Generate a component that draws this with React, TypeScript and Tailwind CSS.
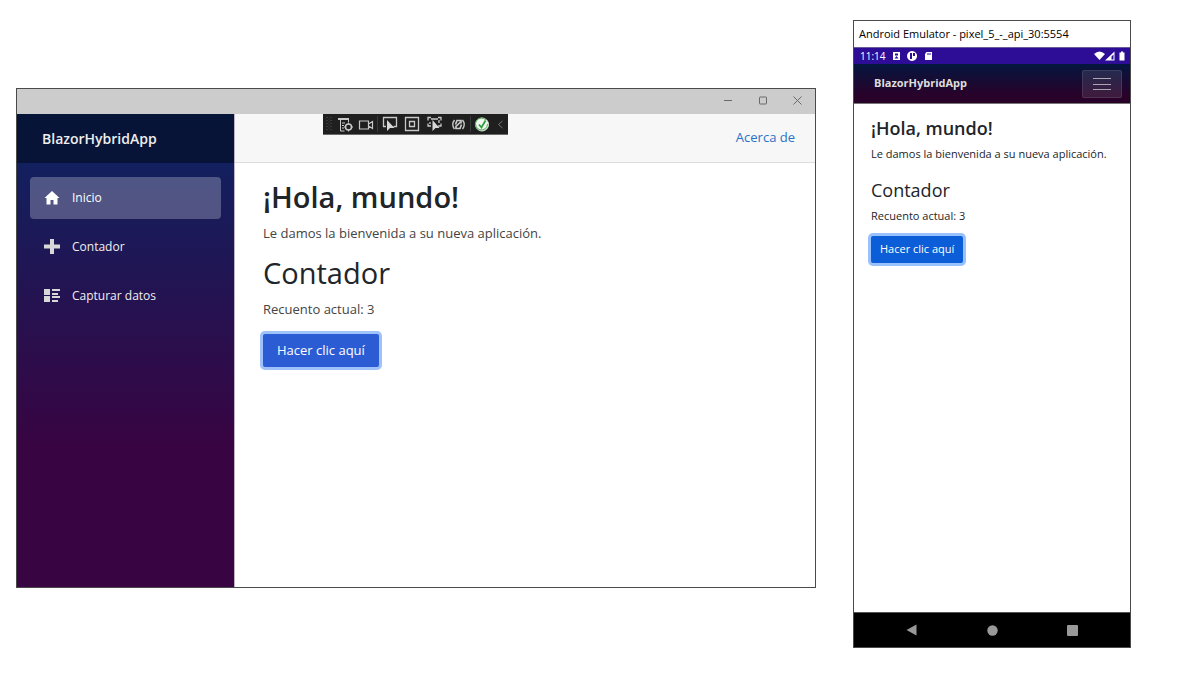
import { useState, type ReactNode } from "react";

function NavItem({ active, icon, children }: { active?: boolean; icon: ReactNode; children: ReactNode }) {
  return (
    <a
      href="#"
      className={
        active
          ? "flex items-center h-[42px] gap-3 px-3.5 rounded bg-white/25 text-xs text-white"
          : "flex items-center h-[42px] gap-3 px-3.5 rounded text-xs text-[#f0f0f0]"
      }
    >
      {icon}
      {children}
    </a>
  );
}

function DebugToolbar() {
  return (
    <div className="absolute top-[25px] left-[306px] flex items-center w-[185px] h-[21px] bg-[#1f1f1f] border-b border-[#6b6b6b]">
      <svg viewBox="0 0 185 20" className="w-full h-full" fill="none" stroke="#c8c8c8">
        {/* grip */}
        <path d="M4 3v14M8 3v14" stroke="#555" strokeDasharray="1 2" />
        <path d="M6 4.500v12" stroke="#444" strokeDasharray="1 2" />
        {/* live tree */}
        <path d="M15 5h11" strokeWidth="2" />
        <path d="M17.500 5v12h4M19 9h3M19 11.500h2M19 14h2M25.500 5v3" />
        <circle cx="25.500" cy="13" r="3" strokeWidth="1.500" />
        <path d="M25.500 8.500v2M25.500 15.500v2M21 13h2M28 13h2" />
        {/* camera */}
        <path d="M36.500 7h9v8h-9zM45.500 10l4-2.500v7l-4-2.500" strokeWidth="1.200" />
        <path d="M54.500 2v16M147.500 2v16" stroke="#3a3a3a" />
        {/* select element */}
        <path d="M63 12.500h-2.500v-9h13v9h-3" strokeWidth="1.300" />
        <path d="M64 6v11l3-3h4.500z" fill="#d8d8d8" stroke="none" />
        {/* layout adorners */}
        <path d="M82.500 3.500h13v13h-13z" strokeWidth="1.300" />
        <path d="M86.500 7.500h5v5h-5z" strokeWidth="1.300" />
        {/* track focus */}
        <path d="M105 6.500V3.500h3M105 9.500v2.500h3M118 6.500V3.500h-3M118 9.500v2.500h-3M108 5h7M107 8v2M116 6v3" strokeWidth="1.300" />
        <path d="M109.500 6v11l3-3h4z" fill="#d8d8d8" stroke="none" />
        {/* hot reload */}
        <path d="M131.500 6q-3.500 4.500 0 9M139.500 6q3.500 4.500 0 9" strokeWidth="1.500" />
        <path d="M132.500 10.500l1.500-4h4v3M138.500 10.500l-1.500 4h-4v-3M133.500 12l4-4" strokeWidth="1.700" />
        <circle cx="159" cy="10.500" r="6.500" fill="#f2f7f2" stroke="#d5e6d5" />
        <path d="M163 6a6 6 0 1 0 1.500 4" stroke="#4fae55" />
        <path d="M156 10.500l2.500 3 4-7" stroke="#2f9e3a" strokeWidth="1.800" />
        <path d="M179.500 7l-4 3.500 4 3.500" stroke="#777" />
      </svg>
    </div>
  );
}

function DesktopWindow({ count, onClick }: { count: number; onClick: () => void }) {
  return (
    <section className="relative flex flex-col flex-1 min-w-0 mt-[68px] h-[500px] border border-[#4a4a4a] bg-white">
      <div className="flex items-center justify-end h-[25px] gap-6 pr-3 pb-0.5 bg-[#cccccc] text-[#6a6a6a]">
        <button aria-label="Minimizar">
          <svg width="11" height="11" className="block" fill="none" stroke="currentColor"><path d="M2 5.500h8" /></svg>
        </button>
        <button aria-label="Maximizar">
          <svg width="11" height="11" className="block" fill="none" stroke="currentColor"><rect x="2.500" y="2" width="7" height="7" rx="0.500" /></svg>
        </button>
        <button aria-label="Cerrar">
          <svg width="11" height="11" className="block" fill="none" stroke="currentColor"><path d="M1.500 1.500l8 8M9.500 1.500l-8 8" /></svg>
        </button>
      </div>

      <div className="flex flex-1 min-h-0">
        <aside className="flex flex-col w-[218px] shrink-0 border-r border-[#bdb3c4] bg-linear-to-b/srgb from-[#0c2564] to-[#380442] to-70%">
          <div className="flex items-center h-[49px] pl-[25px] bg-[#061230]/85 text-sm font-semibold text-[#eeeeee]">
            BlazorHybridApp
          </div>
          <nav className="flex flex-col gap-[7px] pt-3.5 px-[13px]">
            <NavItem
              active
              icon={<svg width="16" height="16" viewBox="0 0 16 16" fill="white"><path d="M8 1L0.500 8H2.500v6.500h4V10h3v4.500h4V8h2z" /></svg>}
            >
              Inicio
            </NavItem>
            <NavItem icon={<svg width="16" height="16" viewBox="0 0 16 16" fill="#d8d8d8"><path d="M6 0h4v5.500h6v4h-6V15H6V9.500H0v-4h6z" /></svg>}>
              Contador
            </NavItem>
            <NavItem
              icon={
                <svg width="16" height="16" viewBox="0 0 16 16" fill="#d8d8d8">
                  <path d="M0 1h6v6H0zM0 8h6v6H0zM8 1h8v2H8zM8 5h6v2H8zM8 8h8v2H8zM8 12h6v2H8z" />
                </svg>
              }
            >
              Capturar datos
            </NavItem>
          </nav>
        </aside>

        <main className="flex-1 min-w-0">
          <div className="flex items-center justify-end h-[49px] pr-5 bg-[#f7f7f7] border-b border-[#dddddd]">
            <a href="#" className="text-[13px] text-[#2a72c8]">Acerca de</a>
          </div>
          <article className="px-7 pt-4 text-[13px] text-[#444444]">
            <h1 className="text-[29px] leading-9 font-semibold text-[#212529]">¡Hola, mundo!</h1>
            <p className="mt-2 leading-5">Le damos la bienvenida a su nueva aplicación.</p>
            <h2 className="mt-3 text-[29px] leading-9 text-[#212529]">Contador</h2>
            <p className="mt-2 leading-5">Recuento actual: {count}</p>
            <button onClick={onClick} className="mt-[15px] h-[33px] px-3.5 rounded-xs bg-[#2c5cd3] text-white ring-3 ring-[#9fc2fb]">
              Hacer clic aquí
            </button>
          </article>
        </main>
      </div>
      <DebugToolbar />
    </section>
  );
}

function PhoneWindow({ count, onClick }: { count: number; onClick: () => void }) {
  return (
    <section className="flex flex-col w-[278px] h-[628px] shrink-0 border border-[#4a4a4a] bg-white text-[11px] text-[#212529]">
      <div className="flex items-center h-[26px] pl-[5px] text-black">Android Emulator - pixel_5_-_api_30:5554</div>
      <div className="flex items-center h-[17px] pl-1.5 pr-1 bg-[#2d0c96] border-t border-[#6b5a9a] text-[10px] font-medium text-white">
        <span>11:14</span>
        <svg width="42" height="10" viewBox="0 0 42 10" className="ml-1.5" fill="white">
          <path fillRule="evenodd" d="M1 1h7v8H1zM3 2.500h3v2H3zM2.500 7.500h4L4.500 5z" />
          <path fillRule="evenodd" d="M20 0a5 5 0 1 0 .1 0zM18 2h2v6h-2zM21 2h2v3h-2z" />
          <path d="M34.500 1h5.500v8h-7V3z" />
          <path d="M36 2v2M38 2v2" stroke="#2d0c96" />
        </svg>
        <svg width="32" height="10" viewBox="0 0 32 10" className="ml-auto" fill="white">
          <path d="M0 3q5.500-5 11 0L5.500 9z" />
          <path fillRule="evenodd" d="M11 9.500L20.500 0.500v9zM17.500 5.500v3h2v-5z" />
          <path d="M25.500 1.500h1.500V0.500h2v1h1.500v8h-5z" />
        </svg>
      </div>
      <header className="flex items-center justify-between h-10 pl-5 pr-2 bg-linear-to-b/srgb from-[#04163f] to-[#280229] to-80% border-b border-[#777777]">
        <span className="text-[11px] font-bold text-[#dddddd]">BlazorHybridApp</span>
        <button aria-label="Menú" className="flex items-center justify-center w-10 h-7 rounded-xs border border-white/10 bg-white/10">
          <svg width="18" height="14" fill="none" stroke="#aaa4b3"><path d="M0 1.500h18M0 7.500h18M0 12.500h18" /></svg>
        </button>
      </header>

      <main className="flex-1 px-[17px] pt-3">
        <h1 className="text-[18px] leading-6 font-semibold">¡Hola, mundo!</h1>
        <p className="mt-1.5 leading-4">Le damos la bienvenida a su nueva aplicación.</p>
        <h2 className="mt-4 text-[18px] leading-6">Contador</h2>
        <p className="mt-1.5 leading-4">Recuento actual: {count}</p>
        <button onClick={onClick} className="mt-3 h-[27px] px-[9px] rounded-xs bg-[#0b5ed7] text-white ring-3 ring-[#98c1fe]">
          Hacer clic aquí
        </button>
      </main>

      <footer className="flex items-center justify-between h-[35px] px-[52px] bg-black border-t border-[#555555]">
        <button aria-label="Atrás">
          <svg width="11" height="12" className="block" fill="#999999"><path d="M10.500 0.500v11L0.500 6z" /></svg>
        </button>
        <button aria-label="Inicio">
          <svg width="11" height="11" className="block" fill="#999999"><circle cx="5.500" cy="5.500" r="5.200" /></svg>
        </button>
        <button aria-label="Recientes">
          <svg width="11" height="11" className="block" fill="#999999"><rect width="11" height="11" rx="1" /></svg>
        </button>
      </footer>
    </section>
  );
}

export default function App() {
  const [count, setCount] = useState(3);
  const increment = () => setCount(count + 1);

  return (
    <div className="flex items-start gap-[37px] min-h-screen pt-5 pl-4 pr-[69px] bg-white font-['Open_Sans','Noto_Sans',sans-serif]">
      <DesktopWindow count={count} onClick={increment} />
      <PhoneWindow count={count} onClick={increment} />
    </div>
  );
}
